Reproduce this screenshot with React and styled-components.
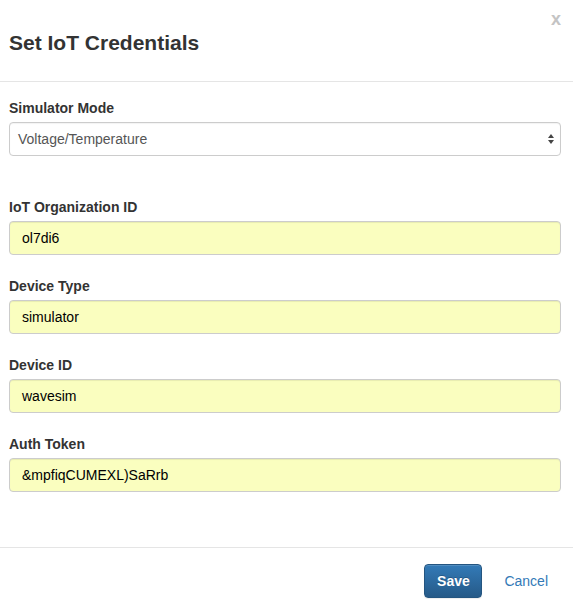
import React from 'react'
import styled, { createGlobalStyle } from 'styled-components'

const Global = createGlobalStyle`
  body {
    margin: 0;
    background: #fff;
    font-family: "Liberation Sans", Arial, sans-serif;
    color: #333;
  }
`;

const Modal = styled.div`
  width: 573px;
  height: 605px;
  display: flex;
  flex-direction: column;
  box-sizing: border-box;
`;

const Header = styled.div`
  position: relative;
  height: 82px;
  box-sizing: border-box;
  border-bottom: 1px solid #e5e5e5;
  padding: 30px 9px 0;
`;

const Title = styled.h4`
  margin: 0;
  font-size: 21px;
  line-height: 26px;
  font-weight: bold;
  color: #333;
`;

const Close = styled.button`
  position: absolute;
  top: 9px;
  right: 12px;
  border: 0;
  background: none;
  padding: 0;
  font-family: "Liberation Sans", Arial, sans-serif;
  font-size: 18px;
  font-weight: bold;
  color: #c4c4c4;
  cursor: pointer;
`;

const Body = styled.div`
  flex: 1;
  padding: 16px 12px 0 9px;
  border-bottom: 1px solid #e5e5e5;
`;

const Group = styled.div`
  display: flex;
  flex-direction: column;
  margin-bottom: ${p => p.gap}px;
`;

const Label = styled.label`
  font-size: 14px;
  line-height: 20px;
  font-weight: bold;
  color: #333;
  margin-bottom: 4px;
`;

const SelectBox = styled.div`
  height: 34px;
  box-sizing: border-box;
  border: 1px solid #ccc;
  border-radius: 4px;
  background: #fff;
  box-shadow: inset 0 1px 1px rgba(0,0,0,0.05);
  display: flex;
  align-items: center;
  justify-content: space-between;
  padding: 0 5px 0 8px;
  font-size: 14px;
  color: #555;
`;

const Input = styled.div`
  height: 34px;
  box-sizing: border-box;
  border: 1px solid #ccc;
  border-radius: 4px;
  background: #fafebf;
  box-shadow: inset 0 1px 1px rgba(0,0,0,0.075);
  display: flex;
  align-items: center;
  padding: 0 12px;
  font-size: 14px;
  color: #000;
`;

const Footer = styled.div`
  height: 57px;
  display: flex;
  align-items: center;
  justify-content: flex-end;
  gap: 22px;
  padding: 8px 25px 0 0;
  box-sizing: border-box;
`;

const SaveButton = styled.button`
  width: 58px;
  height: 34px;
  border: 1px solid #245580;
  border-radius: 4px;
  background: linear-gradient(to bottom, #337ab7 0%, #265a88 100%);
  color: #fff;
  font-family: "Liberation Sans", Arial, sans-serif;
  font-size: 14px;
  font-weight: bold;
  text-shadow: 0 -1px 0 rgba(0,0,0,0.2);
  box-shadow: inset 0 1px 0 rgba(255,255,255,0.15), 0 1px 1px rgba(0,0,0,0.075);
`;

const CancelLink = styled.a`
  font-size: 14px;
  color: #337ab7;
  text-decoration: none;
`;

const fields = [
  { label: 'IoT Organization ID', value: 'ol7di6' },
  { label: 'Device Type', value: 'simulator' },
  { label: 'Device ID', value: 'wavesim' },
  { label: 'Auth Token', value: '&mpfiqCUMEXL)SaRrb' },
];

function Arrows() {
  return (
    <svg width="8" height="12" viewBox="0 0 8 12">
      <path d="M4 1 L7 5 L1 5 Z" fill="#444" />
      <path d="M4 11 L7 7 L1 7 Z" fill="#444" />
    </svg>
  );
}

export default function App() {
  return (
    <>
      <Global />
      <Modal>
        <Header>
          <Title>Set IoT Credentials</Title>
          <Close>x</Close>
        </Header>
        <Body>
          <Group gap={41}>
            <Label>Simulator Mode</Label>
            <SelectBox>
              <span>Voltage/Temperature</span>
              <Arrows />
            </SelectBox>
          </Group>
          {fields.map(f => (
            <Group gap={21} key={f.label}>
              <Label>{f.label}</Label>
              <Input>{f.value}</Input>
            </Group>
          ))}
        </Body>
        <Footer>
          <SaveButton>Save</SaveButton>
          <CancelLink href="#">Cancel</CancelLink>
        </Footer>
      </Modal>
    </>
  );
}
